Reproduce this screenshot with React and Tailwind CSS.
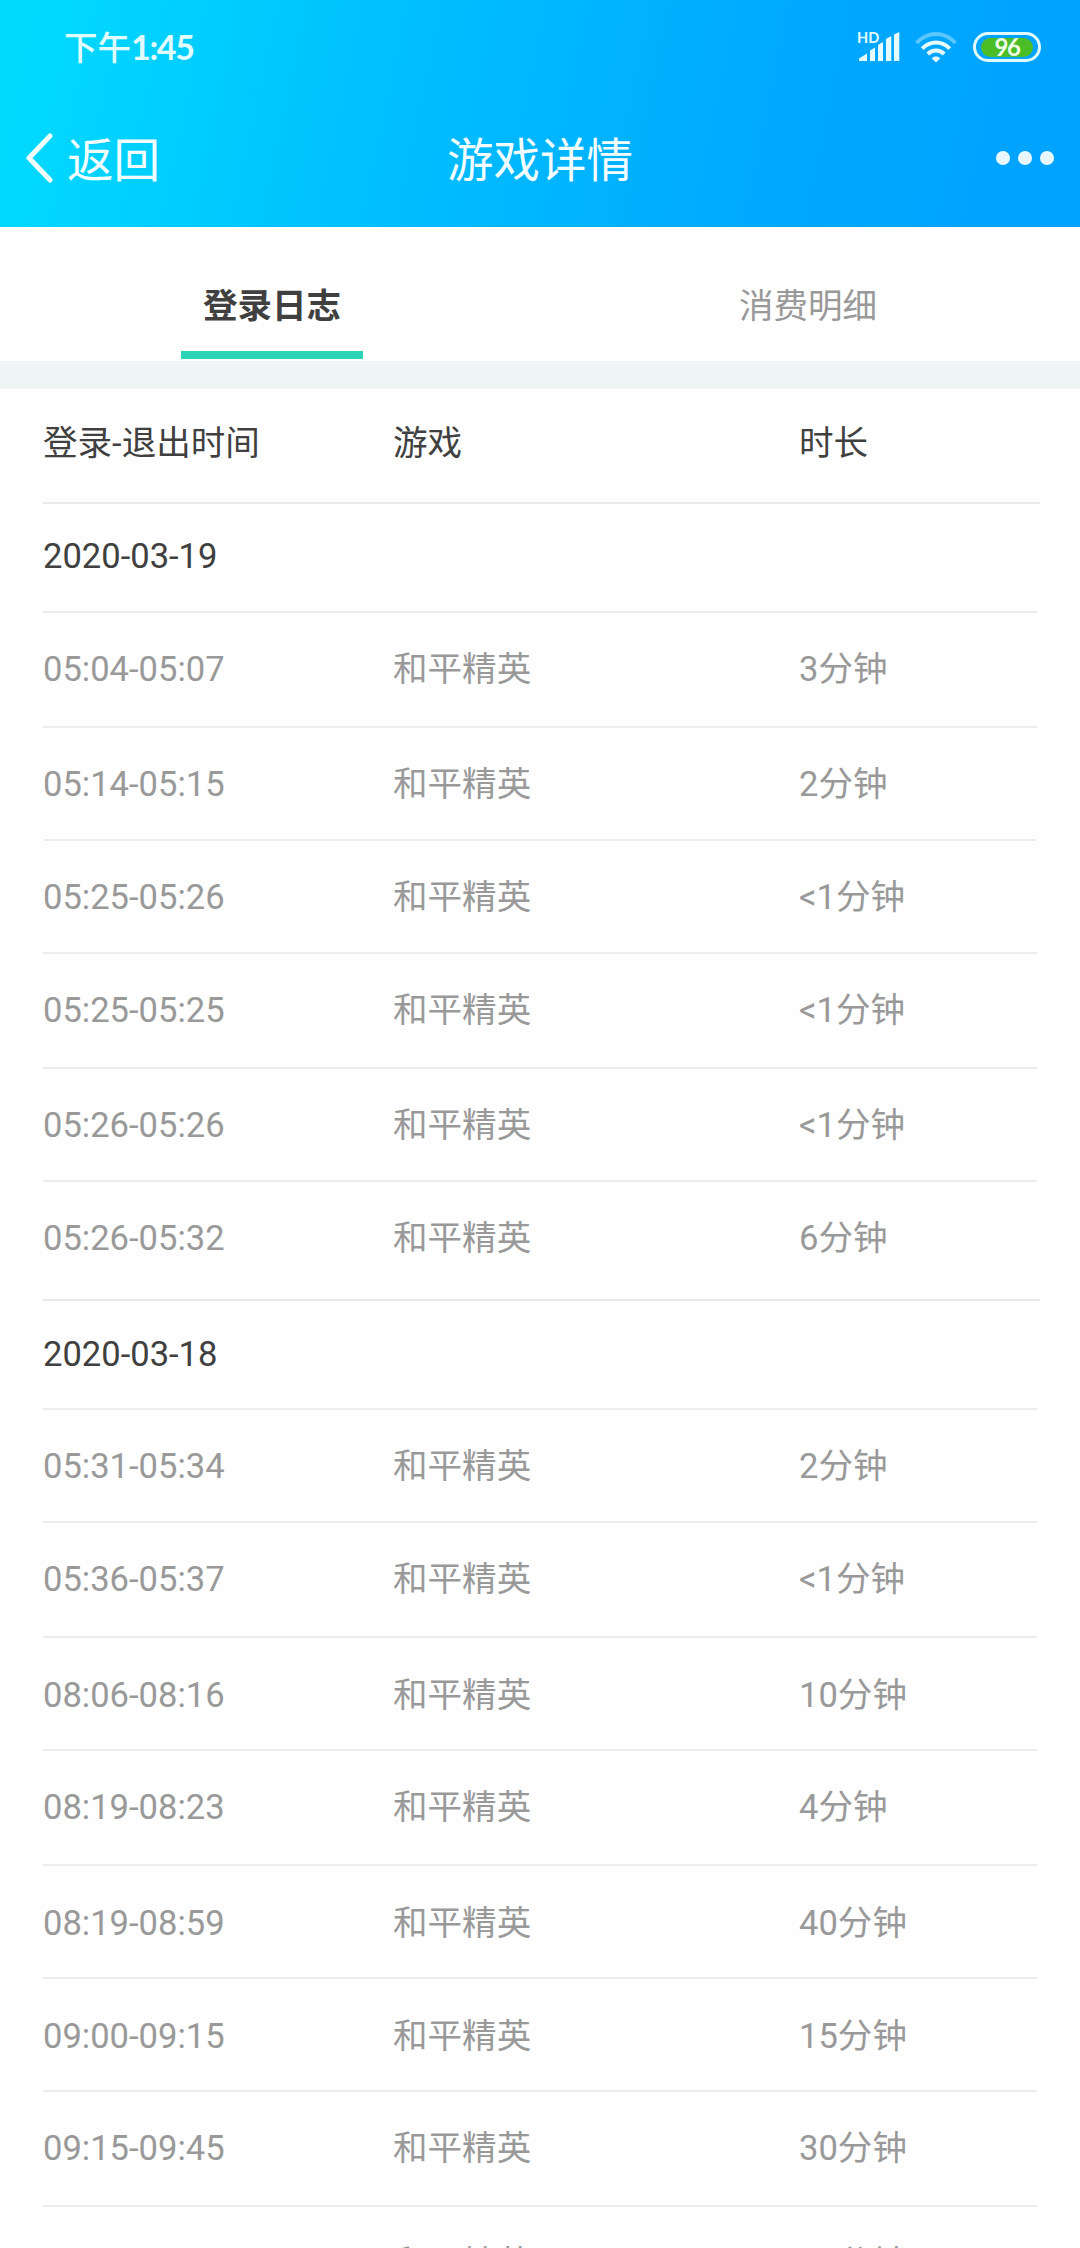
import React from 'react';
import clsx from 'clsx';

// h is the distance down to the next divider, pt the space above the text
const groups = [
  {
    date: '2020-03-19',
    pt: 'pt-[27px]',
    rows: [
      { time: '05:04-05:07', duration: '3分钟', h: 'h-[115px]', pt: 'pt-[31px]' },
      { time: '05:14-05:15', duration: '2分钟', h: 'h-[113px]', pt: 'pt-[31px]' },
      { time: '05:25-05:26', duration: '<1分钟', h: 'h-[113px]', pt: 'pt-[31px]' },
      { time: '05:25-05:25', duration: '<1分钟', h: 'h-[115px]', pt: 'pt-[31px]' },
      { time: '05:26-05:26', duration: '<1分钟', h: 'h-[113px]', pt: 'pt-[31px]' },
      { time: '05:26-05:32', duration: '6分钟', h: 'h-[119px]', pt: 'pt-[31px]' },
    ],
  },
  {
    date: '2020-03-18',
    pt: 'pt-[28px]',
    rows: [
      { time: '05:31-05:34', duration: '2分钟', h: 'h-[113px]', pt: 'pt-[31px]' },
      { time: '05:36-05:37', duration: '<1分钟', h: 'h-[115px]', pt: 'pt-[31px]' },
      { time: '08:06-08:16', duration: '10分钟', h: 'h-[113px]', pt: 'pt-[32px]' },
      { time: '08:19-08:23', duration: '4分钟', h: 'h-[115px]', pt: 'pt-[31px]' },
      { time: '08:19-08:59', duration: '40分钟', h: 'h-[113px]', pt: 'pt-[32px]' },
      { time: '09:00-09:15', duration: '15分钟', h: 'h-[113px]', pt: 'pt-[32px]' },
      { time: '09:15-09:45', duration: '30分钟', h: 'h-[115px]', pt: 'pt-[31px]' },
      { time: '09:45-10:02', duration: '16分钟', h: 'h-[113px]', pt: 'pt-[31px]' },
    ],
  },
];

const SignalIcon = () => (
  <svg width="44" height="34" viewBox="0 0 44 34" fill="#e6fbff" className="overflow-visible">
    <text x="0" y="12.5" fontSize="14.5" fontWeight="700" fontFamily="Lato, sans-serif">HD</text>
    <path d="M2 31V28.5L10 23.5V31Z" />
    <path d="M13 31V20.5L18 17.5V31Z" />
    <path d="M21 31V15L26 12V31Z" />
    <path d="M29 31V9L34.3 6V31Z" />
    <path d="M37 31V4.5L42.3 2V31Z" />
  </svg>
);

const WifiIcon = () => (
  <svg width="42" height="32" viewBox="0 0 42 32" fill="none" stroke="#e6fbff" strokeWidth="4">
    <path d="M1.5 12C12.5 0 29.5 0 40.5 12" stroke="#5cc6ff" />
    <path d="M7.2 17.6C15 9.4 27 9.4 34.8 17.6" />
    <path d="M12.8 23C17.5 18.2 24.5 18.2 29.2 23" />
    <path d="M16.8 27.4C19 24.8 23 24.8 25.2 27.4L21 31.6Z" fill="#e6fbff" stroke="none" />
  </svg>
);

const StatusBar = () => (
  <div className="flex h-[94px] items-center justify-between pl-[64px] pr-[39px]">
    <div className="flex items-baseline pt-[2px] leading-none text-[#e0fcff]">
      <span className="text-[33.5px] font-medium">下午</span>
      <span className="text-[34px] font-bold tracking-[-1.3px]" style={{ fontFamily: 'Lato, sans-serif' }}>1:45</span>
    </div>
    <div className="flex items-center">
      <SignalIcon />
      <div className="ml-[14px]">
        <WifiIcon />
      </div>
      <div className="ml-[16px] flex h-[30px] w-[68px] rounded-full border-[3px] border-[#dffbff] px-[5px] py-[2.5px]">
        <div className="flex flex-1 items-center justify-center rounded-full bg-[#4bbd27] text-[24px] font-bold leading-none tracking-[-1.5px] text-[#f0ffe8]" style={{ fontFamily: 'Lato, sans-serif' }}>
          96
        </div>
      </div>
    </div>
  </div>
);

const NavBar = () => (
  <div className="grid h-[133px] grid-cols-3 items-center pb-[5px] text-[#f2fdff]">
    <div className="flex items-center pl-[25px]">
      <svg width="28" height="50" viewBox="0 0 28 50" fill="none" stroke="currentColor" strokeWidth="5" strokeLinecap="round" strokeLinejoin="round">
        <path d="M25 3L4 25L25 47" />
      </svg>
      <span className="ml-[14px] pt-[7px] text-[46.5px] leading-none">返回</span>
    </div>
    <h1 className="pt-[7px] text-center text-[46.5px] leading-none">游戏详情</h1>
    <div className="flex justify-end gap-[7.5px] pr-[26px]">
      <span className="size-[14.5px] rounded-full bg-[#e9f8ff]" />
      <span className="size-[14.5px] rounded-full bg-[#e9f8ff]" />
      <span className="size-[14.5px] rounded-full bg-[#e9f8ff]" />
    </div>
  </div>
);

const Tabs = () => (
  <div className="grid h-[134px] grid-cols-2 bg-white px-[4px] text-[34.56px] leading-[50px]">
    <div className="flex flex-col items-center pt-[54px] font-bold text-[#404040]">
      登录日志
      <div className="mt-[20px] h-[8px] w-[182px] bg-[#2bd4b4]" />
    </div>
    <div className="pt-[54px] text-center text-[#999]">消费明细</div>
  </div>
);

const Row = ({ time, duration, h, pt, last }) => (
  <div className={clsx('flex border-b-2 text-[#999]', h, pt, last ? 'border-[#e9e9e9]' : 'mr-[3px] border-[#ececec]')}>
    <span className="w-[350px]">{time}</span>
    <span className="w-[406px]">和平精英</span>
    <span>{duration}</span>
  </div>
);

export default function App() {
  return (
    <div className="h-[2248px] w-[1080px] overflow-hidden bg-[#fefefe]" style={{ fontFamily: 'Roboto, "Noto Sans CJK SC", sans-serif' }}>
      <header className="h-[227px] bg-[linear-gradient(102deg,#00dcff_0%,#00c0ff_35%,#00a8ff_72%,#00a2ff_100%)]">
        <StatusBar />
        <NavBar />
      </header>
      <Tabs />
      <div className="h-[28px] bg-[#eff4f4]" />

      <main className="pl-[43px] pr-[40px] text-[34.56px] leading-[50px]">
        <div className="flex h-[115px] border-b-2 border-[#e9e9e9] pt-[29px] text-[#404040]">
          <span className="w-[350px]">登录-退出时间</span>
          <span className="w-[406px]">游戏</span>
          <span>时长</span>
        </div>
        {groups.map((group) => (
          <section key={group.date}>
            <div className={clsx('mr-[3px] h-[109px] border-b-2 border-[#ececec] text-[#404040]', group.pt)}>{group.date}</div>
            {group.rows.map((row, i) => (
              <Row key={i} {...row} last={i === group.rows.length - 1} />
            ))}
          </section>
        ))}
      </main>
    </div>
  );
}
